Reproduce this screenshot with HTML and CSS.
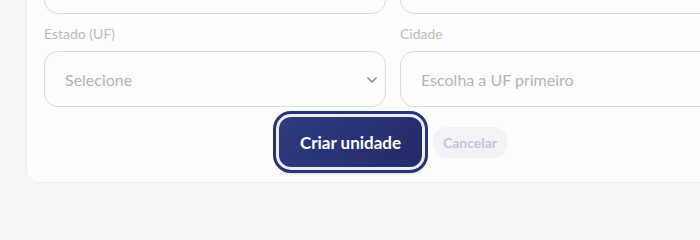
FILE: index.html
```html
<!DOCTYPE html>
<html lang="pt-BR">
<head>
    <meta charset="UTF-8">
    <meta name="viewport" content="width=device-width, initial-scale=1.0">
    <title>Nova unidade</title>
    <link rel="stylesheet" href="styles.css">
</head>
<body>
    <div class="page">
        <div class="card">
            <div class="grid">
                <div class="field"><div class="input"></div></div>
                <div class="field"><div class="input"></div></div>
            </div>
            <div class="grid">
                <div class="field">
                    <label>Estado (UF)</label>
                    <div class="input select">
                        <span>Selecione</span>
                        <svg width="10" height="6" viewBox="0 0 10 6"><path d="M1 1l4 4 4-4" fill="none" stroke="#8a8a8a" stroke-width="1.6" stroke-linecap="round" stroke-linejoin="round"/></svg>
                    </div>
                </div>
                <div class="field">
                    <label>Cidade</label>
                    <div class="input"><span>Escolha a UF primeiro</span></div>
                </div>
            </div>
            <div class="actions">
                <button class="btn-primary">Criar unidade</button>
                <button class="btn-cancel">Cancelar</button>
            </div>
        </div>
    </div>
</body>
</html>
```

FILE: styles.css
```css
body {
    margin: 0;
    padding: 0;
    background: #f7f6f5;
    font-family: Lato, "Open Sans", sans-serif;
    overflow: hidden;
}
.page{
    padding-left: 26px;
}
.card{
    width: 698px;
    margin-top: -61px;
    padding: 18px 17px 15px 17px;
    background: #fcfdfd;
    border: 1px solid #efefee;
    border-radius: 13px;
}
.grid{
    display: grid;
    grid-template-columns: 342px 342px;
    gap: 14px;
}
.field label{
    display: block;
    font-size: 14px;
    line-height: 16px;
    color: #c4bcb4;
    margin: 12px 0 9px;
}
.input{
    height: 54px;
    border: 1px solid #dcdcdc;
    border-radius: 14px;
    background: #fcfdfd;
    display: flex;
    align-items: center;
    padding: 0 20px;
    font-size: 16px;
    color: #b4b4b4;
}
.select{
    justify-content: space-between;
    padding-right: 8px;
}
.select svg{
    margin-top: 1px;
}
.actions{
    display: flex;
    justify-content: center;
    align-items: center;
    gap: 11px;
    margin-top: 10px;
}
.btn-primary{
    width: 143px;
    height: 50px;
    border: none;
    border-radius: 12px;
    background: linear-gradient(135deg, #2d3b82, #252a69);
    color: #fff;
    font-family: inherit;
    font-weight: 700;
    font-size: 17px;
    outline: 3px solid #2a3379;
    outline-offset: 3px;
    box-shadow: 0 0 0 3px #eceef4, 0 4px 3px 3px #d8d8e2;
}
.btn-cancel{
    width: 74px;
    height: 31px;
    border: none;
    border-radius: 14px;
    background: #f2f2f7;
    color: #c2c5da;
    font-family: inherit;
    font-weight: 700;
    font-size: 14px;
}
```
